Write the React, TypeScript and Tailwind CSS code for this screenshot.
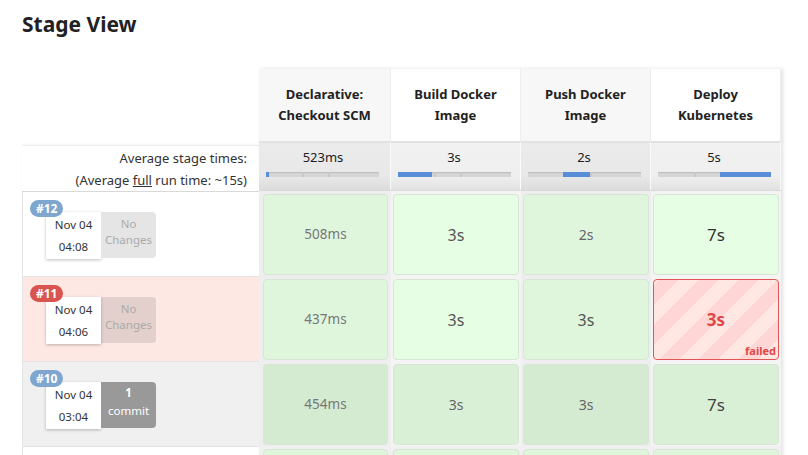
import React from "react";

const stages = [
  { name: ["Declarative:", "Checkout SCM"], avg: "523ms", bar: [0, 3], shade: true },
  { name: ["Build Docker", "Image"], avg: "3s", bar: [0, 34], shade: false },
  { name: ["Push Docker", "Image"], avg: "2s", bar: [35, 27], shade: true },
  { name: ["Deploy", "Kubernetes"], avg: "5s", bar: [62, 51], shade: false },
];

type Cell = { t: string; size: string; color: string; failed?: boolean };

const runs: {
  id: string;
  date: string;
  time: string;
  kind: "ok" | "failed" | "dark";
  changes: string[];
  cells: Cell[];
}[] = [
  {
    id: "#12",
    date: "Nov 04",
    time: "04:08",
    kind: "ok",
    changes: ["No", "Changes"],
    cells: [
      { t: "508ms", size: "text-[13.5px]", color: "text-[#777]" },
      { t: "3s", size: "text-[16px]", color: "text-[#555]" },
      { t: "2s", size: "text-[14px]", color: "text-[#666]" },
      { t: "7s", size: "text-[17px]", color: "text-[#333]" },
    ],
  },
  {
    id: "#11",
    date: "Nov 04",
    time: "04:06",
    kind: "failed",
    changes: ["No", "Changes"],
    cells: [
      { t: "437ms", size: "text-[13.5px]", color: "text-[#777]" },
      { t: "3s", size: "text-[16px]", color: "text-[#555]" },
      { t: "3s", size: "text-[16px]", color: "text-[#555]" },
      { t: "3s", size: "text-[17px]", color: "text-[#e04848]", failed: true },
    ],
  },
  {
    id: "#10",
    date: "Nov 04",
    time: "03:04",
    kind: "dark",
    changes: ["1", "commit"],
    cells: [
      { t: "454ms", size: "text-[13.5px]", color: "text-[#777]" },
      { t: "3s", size: "text-[14px]", color: "text-[#666]" },
      { t: "3s", size: "text-[14px]", color: "text-[#666]" },
      { t: "7s", size: "text-[17px]", color: "text-[#444]" },
    ],
  },
];

const RunInfo = ({ run }: { run: (typeof runs)[number] }) => {
  const rowBg =
    run.kind === "failed" ? "bg-[#fde8e4]" : run.kind === "dark" ? "bg-[#f0f0f0]" : "bg-white";
  const badgeBg = run.kind === "failed" ? "bg-[#d9534f]" : "bg-[#7fa6cf]";
  const chBox =
    run.kind === "dark"
      ? "bg-[#999] text-white"
      : run.kind === "failed"
        ? "bg-black/10 text-[#aaa]"
        : "bg-[#e5e5e5] text-[#aaa]";
  return (
    <div className={`relative h-[85px] border-l border-b border-[#e4e4e4] ${rowBg}`}>
      <span
        className={`absolute left-[7px] top-[8px] z-10 h-[17px] rounded-full px-[6px] text-[12px] font-bold leading-[17px] text-white ${badgeBg}`}
      >
        {run.id}
      </span>
      <div className="flex pl-[23px] pt-[20px]">
        <div className="flex h-[47px] w-[55px] flex-col items-center justify-center gap-[8px] bg-white text-[11.5px] leading-[14px] text-[#333] shadow-[0_1px_3px_rgba(0,0,0,0.25)]">
          <span>{run.date}</span>
          <span>{run.time}</span>
        </div>
        <div
          className={`flex h-[46px] w-[55px] flex-col items-center justify-center rounded-r-[4px] pb-[6px] text-[11.5px] leading-[16px] ${chBox}`}
        >
          <span className={run.kind === "dark" ? "mb-[2px] font-bold" : ""}>{run.changes[0]}</span>
          <span>{run.changes[1]}</span>
        </div>
      </div>
    </div>
  );
};

const StageCell = ({ cell, col, dark }: { cell: Cell; col: number; dark: boolean }) => {
  const even = col % 2 === 0;
  let bg = even ? "bg-[#dff6dd]" : "bg-[#e6ffe4]";
  if (dark) bg = even ? "bg-[#d4ebd2]" : "bg-[#d9f0d7]";
  if (cell.failed) {
    return (
      <div className="relative flex h-[81px] items-center justify-center rounded-[4px] border border-[#e25555] bg-[repeating-linear-gradient(-45deg,#ffe7e4_0px,#ffe7e4_14px,#ffd6d6_14px,#ffd6d6_28px)]">
        <span className={`font-bold ${cell.size} ${cell.color}`}>{cell.t}</span>
        <span className="absolute bottom-[2px] right-[2px] text-[11px] font-bold leading-[12px] text-[#e04848]">
          failed
        </span>
      </div>
    );
  }
  return (
    <div className={`flex h-[81px] items-center justify-center rounded-[4px] border border-[#d8e6d6] ${bg}`}>
      <span className={`${cell.size} ${cell.color}`}>{cell.t}</span>
    </div>
  );
};

export default function App() {
  return (
    <div className="h-[455px] w-[808px] overflow-hidden bg-white font-['Noto_Sans',sans-serif] text-[#333]">
      <h2 className="pl-[22px] pt-[9px] text-[21px] font-bold leading-[30px] text-[#222]">Stage View</h2>

      <div className="mt-[30px] flex pl-[22px]">
        {/* left column */}
        <div className="w-[237px]">
          <div className="h-[76px]" />
          <div className="flex h-[46px] flex-col items-end justify-center gap-[2px] border-t border-[#eee] pr-[12px] text-[13px] leading-[20px] text-[#333] shadow-[0_-1px_2px_rgba(0,0,0,0.04)]">
            <span>Average stage times:</span>
            <span>
              (Average <span className="underline">full</span> run time: ~15s)
            </span>
          </div>
          <div className="h-[1px] bg-[#d9d9d9]" />
          {runs.map((r) => (
            <RunInfo key={r.id} run={r} />
          ))}
          <div className="h-[10px] border-l border-[#e4e4e4]" />
        </div>

        {/* stage block */}
        <div className="w-[522px] shadow-[2px_0_4px_rgba(0,0,0,0.12)]">
          <div className="grid grid-cols-[132px_130px_130px_130px]">
            {stages.map((s, i) => (
              <div
                key={i}
                className={`flex h-[72px] flex-col items-center justify-center border-r border-[#eee] text-[13px] font-bold leading-[21px] text-[#222] ${s.shade ? "bg-[#f7f7f7]" : "bg-white"}`}
              >
                <span>{s.name[0]}</span>
                <span>{s.name[1]}</span>
              </div>
            ))}
            {stages.map((s, i) => (
              <div
                key={`a${i}`}
                className={`flex h-[49px] flex-col border-r border-t-[2px] border-r-[#fafafa] border-t-[#e2e2e2] pl-[7px] pr-[10px] pt-[5px] ${s.shade ? "bg-[linear-gradient(#ebebeb,#e8e8e8_70%,#dcdcdc)]" : "bg-[linear-gradient(#f1f1f1,#efefef_70%,#e2e2e2)]"}`}
              >
                <span className="text-center text-[13px] leading-[18px] text-[#222]">{s.avg}</span>
                <div className="relative mt-[6px] h-[5px] w-[113px] bg-[#d6d6d6] shadow-[inset_0_1px_1px_rgba(0,0,0,0.12)]">
                  <span className="absolute left-[36px] top-0 h-[5px] w-[2px] bg-[#c8c8c8]" />
                  <span className="absolute left-[62px] top-0 h-[5px] w-[2px] bg-[#c8c8c8]" />
                  <span
                    className="absolute top-0 h-[5px] bg-[#5a8dd8]"
                    style={{ left: s.bar[0], width: s.bar[1] }}
                  />
                </div>
              </div>
            ))}
          </div>
          <div className="h-[1px] bg-[#d9d9d9]" />
          {runs.map((r) => (
            <div
              key={r.id}
              className="grid h-[85px] grid-cols-[132px_130px_130px_130px] bg-[#f0f0f0]"
            >
              {r.cells.map((c, i) => (
                <div
                  key={i}
                  className={`pt-[3px] ${i === 0 ? "pl-[4px] pr-[3px]" : "px-[2px]"} ${i % 2 === 0 ? "bg-[#eeeeee]" : "bg-[#f4f4f4]"}`}
                >
                  <StageCell cell={c} col={i} dark={r.kind === "dark"} />
                </div>
              ))}
            </div>
          ))}
          <div className="grid h-[20px] grid-cols-[132px_130px_130px_130px] bg-[#f0f0f0]">
            {stages.map((_, i) => (
              <div key={i} className={`pt-[3px] ${i === 0 ? "pl-[4px] pr-[3px]" : "px-[2px]"}`}>
                <div className="h-[20px] rounded-t-[4px] border border-[#d8e6d6] bg-[#dff6dd]" />
              </div>
            ))}
          </div>
        </div>
      </div>
    </div>
  );
}
